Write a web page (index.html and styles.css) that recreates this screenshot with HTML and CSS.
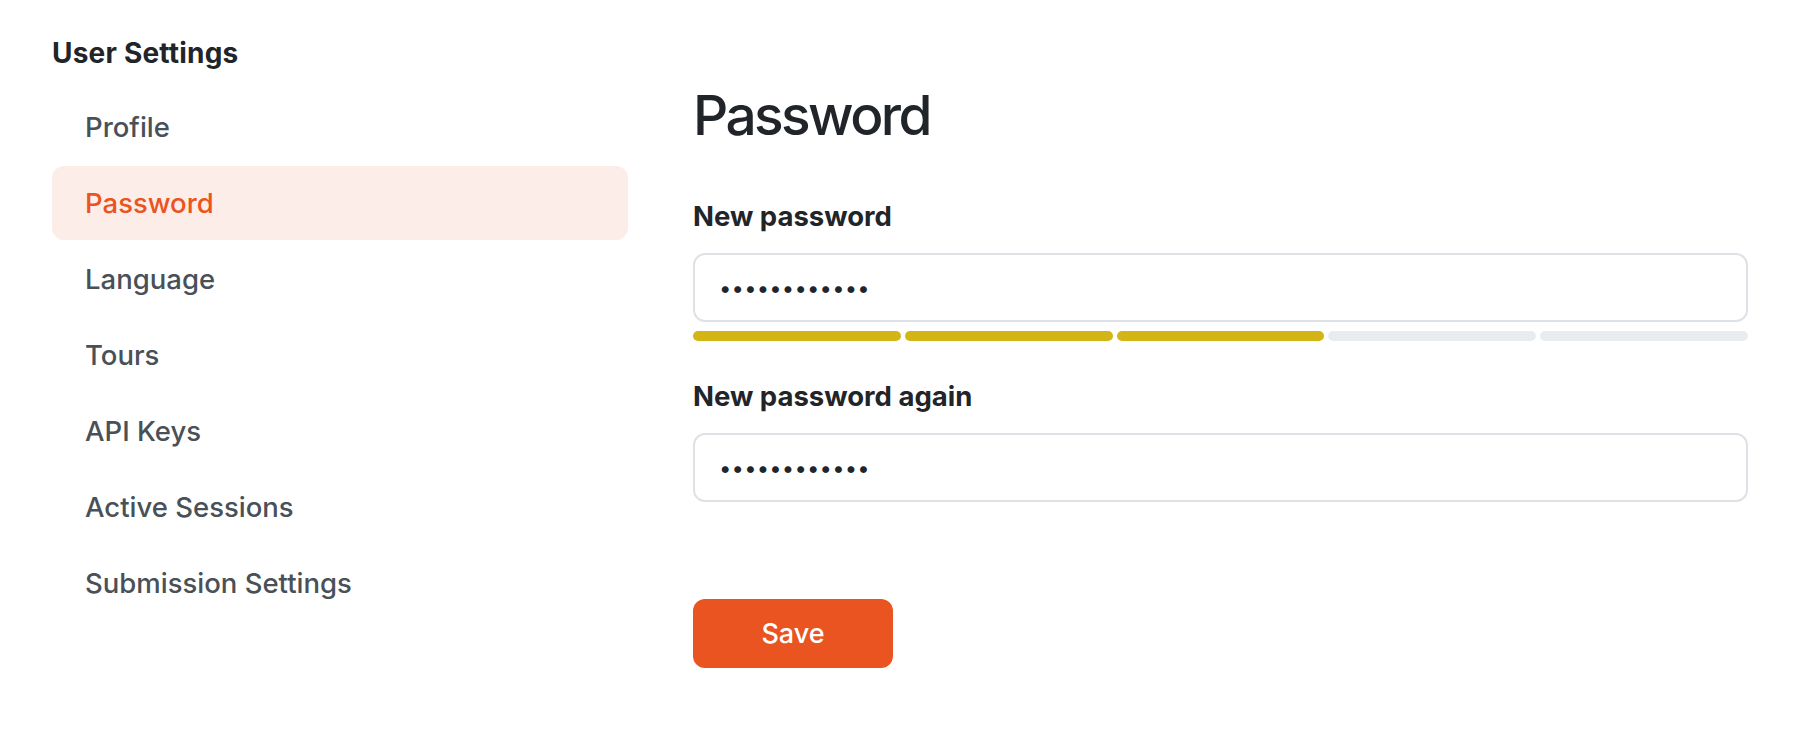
FILE: index.html
```html
<!DOCTYPE html>
<html lang="en">
<head>
<meta charset="utf-8">
<title>User Settings - Password</title>
<link rel="stylesheet" href="styles.css">
</head>
<body>
<div class="page">
  <aside class="sidebar">
    <div class="sidebar-title">User Settings</div>
    <nav class="nav">
      <a class="nav-item" href="#">Profile</a>
      <a class="nav-item active" href="#">Password</a>
      <a class="nav-item" href="#">Language</a>
      <a class="nav-item" href="#">Tours</a>
      <a class="nav-item" href="#">API Keys</a>
      <a class="nav-item" href="#">Active Sessions</a>
      <a class="nav-item" href="#">Submission Settings</a>
    </nav>
  </aside>
  <main class="content">
    <h1 class="title">Password</h1>
    <form class="form">
      <div class="field">
        <label class="label" for="pw1">New password</label>
        <input class="input" id="pw1" type="password" value="aaaaaaaaaaaa">
        <div class="strength">
          <span class="seg on"></span>
          <span class="seg on"></span>
          <span class="seg on"></span>
          <span class="seg"></span>
          <span class="seg"></span>
        </div>
      </div>
      <div class="field field-second">
        <label class="label" for="pw2">New password again</label>
        <input class="input" id="pw2" type="password" value="aaaaaaaaaaaa">
      </div>
      <div class="actions">
        <button class="btn" type="button">Save</button>
      </div>
    </form>
  </main>
</div>
</body>
</html>
```

FILE: styles.css
```css
* { box-sizing: border-box; }

html, body {
  margin: 0;
  padding: 0;
  background: #ffffff;
}

body {
  font-family: Inter, "Noto Sans", "Liberation Sans", sans-serif;
  color: #212529;
}

.page {
  display: flex;
  gap: 65px;
  padding: 36px 64px 0 52px;
}

.sidebar {
  width: 576px;
  flex: none;
}

.sidebar-title {
  font-size: 28px;
  font-weight: 700;
  line-height: 34px;
  letter-spacing: 0.2px;
  color: #212529;
  margin-bottom: 20px;
}

.nav {
  display: flex;
  flex-direction: column;
  gap: 2px;
}

.nav-item {
  display: block;
  height: 74px;
  line-height: 74px;
  padding-left: 33px;
  border-radius: 12px;
  font-size: 27.5px;
  font-weight: 500;
  color: #495057;
  text-decoration: none;
}

.nav-item.active {
  background: #fdede8;
  color: #e95420;
}

.content {
  flex: 1;
  padding-top: 46px;
}

.title {
  margin: 0;
  font-size: 55px;
  font-weight: 500;
  line-height: 67px;
  letter-spacing: -2.6px;
  color: #212529;
}

.form {
  margin-top: 50px;
}

.field {
  display: flex;
  flex-direction: column;
}

.field-second {
  margin-top: 38px;
}

.label {
  font-size: 27.5px;
  font-weight: 700;
  line-height: 34px;
  color: #212529;
  margin-bottom: 20px;
}

.input {
  height: 69px;
  width: 100%;
  border: 2px solid #dee2e6;
  border-radius: 12px;
  padding: 0 24px;
  font-family: Inter, "Noto Sans", sans-serif;
  font-size: 22px;
  letter-spacing: 0.2px;
  color: #212529;
  background: #fff;
  outline: none;
}

.strength {
  display: flex;
  gap: 4px;
  margin-top: 9px;
}

.seg {
  flex: 1;
  height: 10px;
  border-radius: 5px;
  background: #e9ecef;
}

.seg.on {
  background: #d4b516;
}

.actions {
  margin-top: 97px;
}

.btn {
  width: 200px;
  height: 69px;
  border: none;
  border-radius: 12px;
  background: #e95420;
  color: #ffffff;
  font-family: Inter, "Noto Sans", sans-serif;
  font-size: 27px;
  font-weight: 500;
  cursor: pointer;
}
```
